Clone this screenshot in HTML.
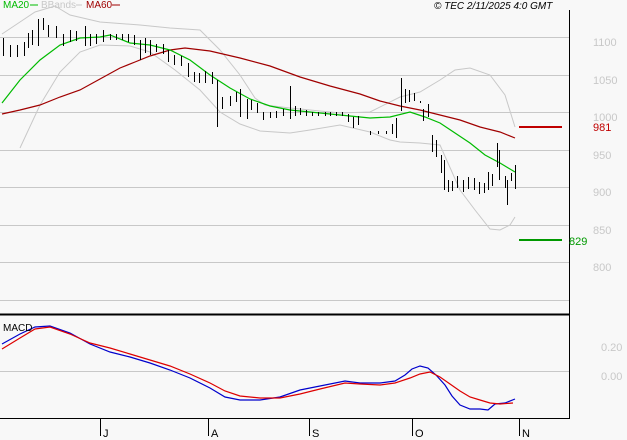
<!DOCTYPE html>
<html><head><style>
body{margin:0;background:#f8f8f8;width:627px;height:440px;overflow:hidden;font-family:"Liberation Sans",sans-serif}
</style></head><body>
<svg width="627" height="440" viewBox="0 0 627 440" xmlns="http://www.w3.org/2000/svg" style="position:absolute;left:0;top:0">
<rect width="627" height="440" fill="#f8f8f8"/>
<g stroke="#c8c8c8" stroke-width="1">
<line x1="0" y1="37.5" x2="569" y2="37.5"/><line x1="0" y1="75.5" x2="569" y2="75.5"/>
<line x1="0" y1="112.5" x2="569" y2="112.5"/><line x1="0" y1="150.5" x2="569" y2="150.5"/>
<line x1="0" y1="187.5" x2="569" y2="187.5"/><line x1="0" y1="225.5" x2="569" y2="225.5"/>
<line x1="0" y1="262.5" x2="569" y2="262.5"/><line x1="0" y1="300.5" x2="569" y2="300.5"/>
<line x1="0" y1="371.5" x2="569" y2="371.5"/>
</g>
<line x1="0" y1="314.5" x2="569" y2="314.5" stroke="#000" stroke-width="2"/>
<line x1="569.5" y1="10" x2="569.5" y2="419" stroke="#000"/>
<line x1="0" y1="418.5" x2="570" y2="418.5" stroke="#000"/>
<g stroke="#000"><line x1="100.5" y1="418" x2="100.5" y2="436"/><line x1="208.5" y1="418" x2="208.5" y2="436"/><line x1="309.5" y1="418" x2="309.5" y2="436"/><line x1="412.5" y1="418" x2="412.5" y2="436"/><line x1="519.5" y1="418" x2="519.5" y2="436"/></g>
<g font-size="11" fill="#000"><text x="103" y="437">J</text><text x="211" y="437">A</text><text x="312" y="437">S</text><text x="415" y="437">O</text><text x="522" y="437">N</text></g>
<g font-size="11" fill="#c8c8c8"><text x="593" y="46">1100</text><text x="593" y="84">1050</text><text x="593" y="121">1000</text><text x="593" y="159">950</text><text x="593" y="196">900</text><text x="593" y="234">850</text><text x="593" y="271">800</text><text x="601" y="351">0.20</text><text x="601" y="380">0.00</text></g>
<text x="593" y="131" font-size="11" fill="#c00000">981</text>
<text x="569" y="245" font-size="11" fill="#009900">829</text>
<line x1="519" y1="127" x2="562" y2="127" stroke="#c00000" stroke-width="2"/>
<line x1="519" y1="240" x2="562" y2="240" stroke="#009900" stroke-width="2"/>
<polyline fill="none" stroke="#c8c8c8" points="2,34 20,22 35,12 55,6 70,15 100,22 140,25 170,28 200,30 210,40 220,50 240,75 255,98 265,105 290,108 310,110 340,113 370,112 400,97 420,92 440,80 455,70 470,68 490,75 505,95 515,127"/>
<polyline fill="none" stroke="#c8c8c8" points="20,148 40,105 60,72 80,52 100,45 130,46 150,52 175,70 200,90 220,112 240,124 260,131 290,133 310,130 340,125 370,132 390,140 400,142 420,143 440,145 460,190 475,210 490,229 500,230 510,225 515,217"/>
<polyline fill="none" stroke="#a00000" stroke-width="1.2" points="2,114 20,110 40,105 60,97 80,90 100,79 120,68 135,62 150,56 170,50 185,48 210,51 240,58 270,66 300,77 330,86 360,94 380,101 400,106 420,110 440,115 460,120 480,127 500,132 515,138"/>
<polyline fill="none" stroke="#00bb00" stroke-width="1.2" points="2,103 20,80 40,60 60,45 80,38 100,37 110,35 130,43 150,45 170,50 190,60 210,75 230,88 250,99 270,106 290,110 310,112 330,114 350,116 370,118 390,117 410,112 425,117 440,123 455,133 470,143 485,155 500,163 515,172"/>
<g stroke="#000" stroke-width="1" shape-rendering="crispEdges">
<path d="M3.5,38v18M10.5,45v12M17.5,45v12M24.5,42v14M28.5,33v15M32.5,30v15M38.5,19v27M43.5,18v12M48.5,25v12M56.5,26v12M63.5,34v12M70.5,30v12M76.5,31v10M85.5,26v20M90.5,34v12M96.5,34v10M103.5,30v12M110.5,34v6M116.5,34v6M122.5,34v6M128.5,34v8M134.5,35v10M140.5,40v20M145.5,38v15M150.5,40v15M156.5,44v8M163.5,44v10M168.5,50v12M174.5,55v10M181.5,56v10M188.5,63v14M194.5,72v10M199.5,73v10M205.5,71v12M212.5,72v12M217.5,80v47M222.5,97v12M230.5,96v10M236.5,92v10M240.5,89v28M247.5,99v20M251.5,100v10M257.5,103v10M263.5,112v8M270.5,112v6M276.5,111v7M283.5,109v7M290.5,86v33M295.5,106v10M300.5,108v7M306.5,110v6M312.5,112v4M318.5,112v4M325.5,112v4M330.5,112v4M336.5,112v4M342.5,112v4M348.5,114v8M353.5,117v11M358.5,116v9M370.5,131v4M378.5,131v3M386.5,131v3M392.5,124v10M396.5,118v20M401.5,78v33M405.5,89v14M409.5,90v12M414.5,93v8M420.5,101v2M423.5,109v12M428.5,104v13M432.5,135v17M436.5,140v17M441.5,155v18M444.5,160v30M448.5,180v12M452.5,181v10M457.5,176v12M463.5,180v12M468.5,177v12M474.5,178v12M479.5,182v12M484.5,183v10M488.5,172v18M492.5,174v12M497.5,143v24M499.5,150v30M505.5,176v12M507.5,180v25M511.5,173v8M515.5,165v24"/>
</g>
<polyline fill="none" stroke="#0000cc" stroke-width="1.2" points="2,344 20,334 35,327 50,326 70,333 90,344 110,352 130,357 150,363 170,370 190,378 210,388 225,397 240,400 260,400 280,397 300,390 320,386 345,381 360,383 380,383 395,381 405,375 412,369 420,366 428,368 436,375 445,385 452,396 460,405 470,409 480,409 488,410 495,404 505,403 515,399"/>
<polyline fill="none" stroke="#dd0000" stroke-width="1.2" points="2,349 20,338 35,329 50,327 70,334 90,343 110,348 130,354 150,360 170,366 190,374 210,383 225,391 240,396 260,398 280,398 300,394 320,389 345,383 360,384 380,385 395,383 410,378 420,374 430,372 440,377 450,384 460,391 470,397 480,400 490,403 500,404 513,403"/>
<text x="3" y="8" font-size="10" fill="#00bb00">MA20</text><line x1="30" y1="5" x2="38" y2="5" stroke="#00bb00"/>
<text x="41" y="8" font-size="10" fill="#c8c8c8">BBands</text><line x1="76" y1="5" x2="82" y2="5" stroke="#c8c8c8"/>
<text x="86" y="8" font-size="10" fill="#a00000">MA60</text><line x1="112" y1="5" x2="120" y2="5" stroke="#a00000"/>
<text x="434" y="9" font-size="10" font-style="italic" fill="#000">© TEC 2/11/2025 4:0 GMT</text>
<text x="3" y="331" font-size="10" fill="#000">MACD</text>
</svg>
</body></html>
